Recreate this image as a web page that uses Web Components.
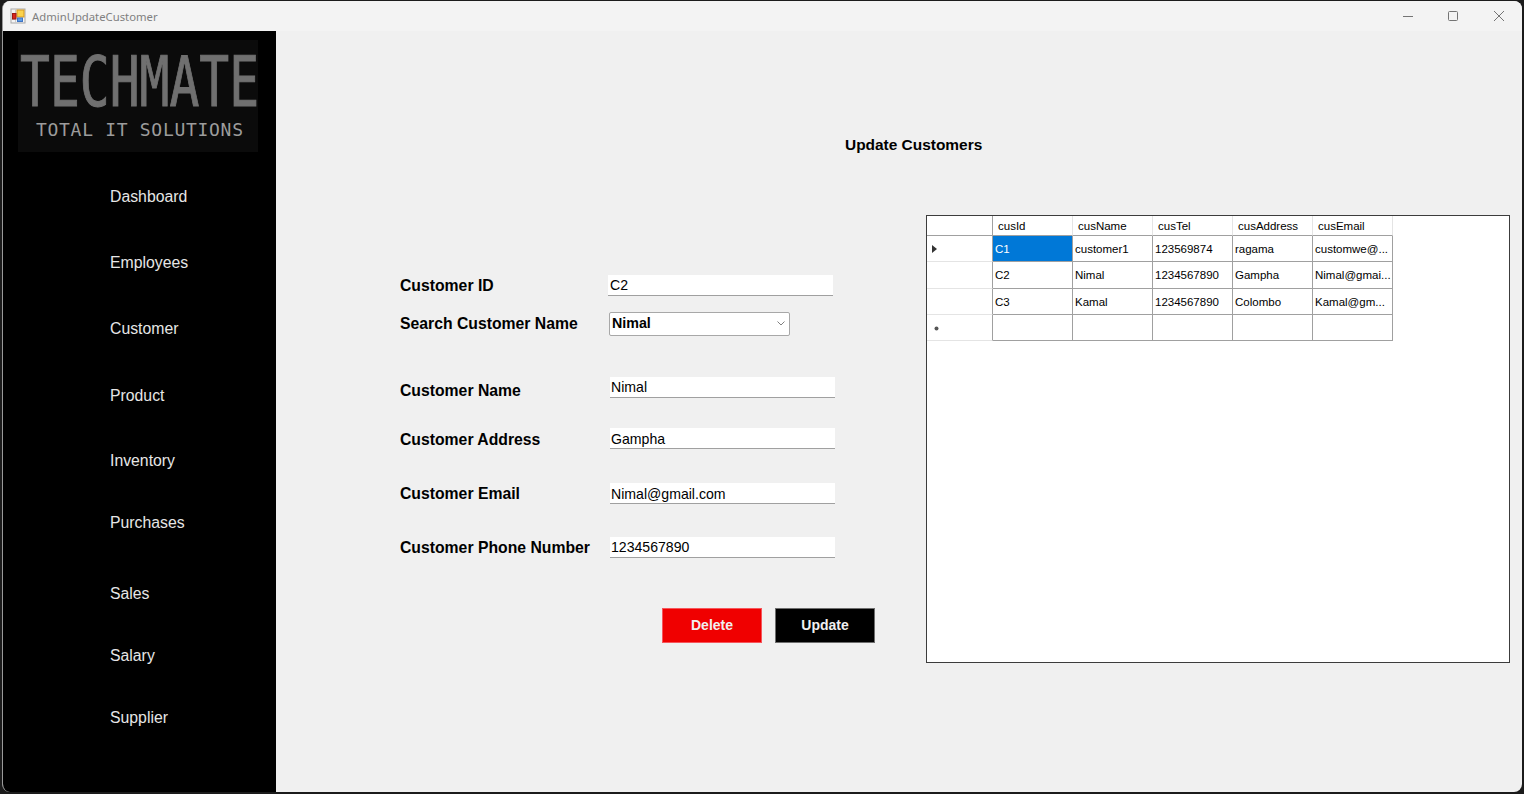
<!DOCTYPE html>
<html>
<head>
<meta charset="utf-8">
<title>AdminUpdateCustomer</title>
<style>
  html, body { margin: 0; height: 100%; background: #1b1b1b; overflow: hidden; }
  body { font-family: "Liberation Sans", Arial, sans-serif; }
</style>
</head>
<body>
<app-window>
  <side-nav slot="side">
    <nav-item>Dashboard</nav-item>
    <nav-item>Employees</nav-item>
    <nav-item>Customer</nav-item>
    <nav-item>Product</nav-item>
    <nav-item>Inventory</nav-item>
    <nav-item>Purchases</nav-item>
    <nav-item>Sales</nav-item>
    <nav-item>Salary</nav-item>
    <nav-item>Supplier</nav-item>
  </side-nav>
  <update-panel>
    <form-row label="Customer ID" field-x="208" gap="0"><text-box style="padding-left:2px">C2</text-box></form-row>
    <form-row label="Search Customer Name" field-x="209" gap="16" height="24"><combo-box>Nimal</combo-box></form-row>
    <form-row label="Customer Name" field-x="210" gap="41" shift="7"><text-box>Nimal</text-box></form-row>
    <form-row label="Customer Address" field-x="210" gap="30" shift="2"><text-box style="padding-top:2px">Gampha</text-box></form-row>
    <form-row label="Customer Email" field-x="210" gap="34"><text-box style="padding-top:2px">Nimal@gmail.com</text-box></form-row>
    <form-row label="Customer Phone Number" field-x="210" gap="33"><text-box>1234567890</text-box></form-row>
    <button-row>
      <action-button kind="danger">Delete</action-button>
      <action-button>Update</action-button>
    </button-row>
    <data-grid slot="grid"></data-grid>
  </update-panel>
</app-window>

<script>
class AppWindow extends HTMLElement {
  constructor() {
    super();
    this.attachShadow({ mode: "open" }).innerHTML = `
    <style>
      :host { display: flex; flex-direction: column; box-sizing: border-box; width: 1520px; height: 791px;
        margin: 1px 2px; border-left: 1px solid #9a9a9a; border-radius: 8px; overflow: hidden; background: #f0f0f0; }
      .bar { display: flex; align-items: center; height: 30px; flex: none; background: #f3f3f3; color: #808080;
        font: 11.300px "Noto Sans", "Open Sans", sans-serif; }
      .icon { width: 16px; height: 16px; margin: 0 6px 0 7px; flex: none; }
      .title { flex: 1; }
      .ctl { box-sizing: border-box; width: 45px; height: 30px; display: flex; align-items: center; justify-content: center; }
      .ctl.shift { padding-right: 2px; }
      .ctl svg { width: 12px; height: 12px; fill: none; stroke: #747474; stroke-width: 1; }
      .body { flex: 1; display: flex; min-height: 0; }
    </style>
    <div class="bar">
      <svg class="icon" viewBox="0 0 16 16">
        <rect x="1" y="1" width="14" height="14" fill="#f4f4f4" stroke="#a9a9a9"/>
        <path d="M5.5 1v4M1 5.5h5M1 11.500h4M5.500 11v4" stroke="#c9c9c9" fill="none"/>
        <rect x="7" y="2" width="7" height="7" fill="#fbd34d" stroke="#d79a1e"/>
        <rect x="2.500" y="5.500" width="3.500" height="5.500" fill="#d8261c" stroke="#9c1a14"/>
        <rect x="7.500" y="10" width="5" height="3.500" fill="#5c9ee8" stroke="#3f74c4"/>
      </svg>
      <div class="title">AdminUpdateCustomer</div>
      <div class="ctl shift"><svg viewBox="0 0 12 12"><path d="M1 6.500h10"/></svg></div>
      <div class="ctl shift"><svg viewBox="0 0 12 12"><rect x="1.500" y="1.500" width="9" height="9" rx="1"/></svg></div>
      <div class="ctl" style="margin-right:1px"><svg viewBox="0 0 12 12"><path d="M1 1l10 10M11 1L1 11"/></svg></div>
    </div>
    <div class="body"><slot name="side"></slot><slot></slot></div>`;
  }
}

class SideNav extends HTMLElement {
  constructor() {
    super();
    this.attachShadow({ mode: "open" }).innerHTML = `
    <style>
      :host { display: block; width: 273px; flex: none; background: #000; }
      .logo { box-sizing: border-box; width: 240px; height: 112px; margin: 9px 0 0 15px; padding-top: 17px;
        background: #0b0b0b; overflow: hidden; }
      .big { height: 51px; margin-left: 2px; white-space: nowrap; color: #707070; -webkit-text-stroke: 1px #707070;
        font: 70px/51px "DejaVu Sans Mono", monospace; transform: scaleX(.709); transform-origin: 0 50%; }
      .small { margin: 15px 0 0 18px; height: 14px; white-space: nowrap; color: #9c9c9c;
        font: 18px/14px "DejaVu Sans Mono", monospace; letter-spacing: .7px; }
      nav { display: grid; grid-template-rows: 66px 66px 67px 65px 62px 71px 62px 62px 40px; margin-top: 36px; }
    </style>
    <div class="logo"><div class="big">TECHMATE</div><div class="small">TOTAL IT SOLUTIONS</div></div>
    <nav><slot></slot></nav>`;
  }
}

class NavItem extends HTMLElement {
  constructor() {
    super();
    this.attachShadow({ mode: "open" }).innerHTML = `
    <style>
      :host { display: block; padding-left: 107px; color: #e6e6e6;
        font: 15.800px/18px "Liberation Sans", sans-serif; }
    </style>
    <slot></slot>`;
  }
}

class UpdatePanel extends HTMLElement {
  constructor() {
    super();
    this.attachShadow({ mode: "open" }).innerHTML = `
    <style>
      :host { display: block; flex: 1; color: #000; font-family: "Liberation Sans", sans-serif; }
      h1 { margin: 105px 0 0 569px; height: 18px; font-size: 15.450px; line-height: 18px; font-weight: bold; }
      .cols { display: flex; margin: 61px 0 0 124px; }
      .form { width: 526px; flex: none; padding-top: 60px; }
    </style>
    <h1>Update Customers</h1>
    <div class="cols">
      <div class="form"><slot></slot></div>
      <slot name="grid"></slot>
    </div>`;
  }
}

class FormRow extends HTMLElement {
  constructor() {
    super();
    this.attachShadow({ mode: "open" });
  }
  connectedCallback() {
    const x = this.getAttribute("field-x") || 210;
    const h = this.getAttribute("height") || 21;
    const gap = this.getAttribute("gap") || 0;
    const shift = this.getAttribute("shift") || 0;
    this.shadowRoot.innerHTML = `
    <style>
      :host { display: flex; align-items: center; height: ${h}px; margin-top: ${gap}px; }
      label { width: ${x}px; flex: none; margin-top: ${shift}px; font: bold 15.750px "Liberation Sans", sans-serif; color: #000; white-space: nowrap; }
    </style>
    <label>${this.getAttribute("label")}</label>
    <slot></slot>`;
  }
}

class TextBox extends HTMLElement {
  constructor() {
    super();
    this.attachShadow({ mode: "open" }).innerHTML = `
    <style>
      :host { display: block; box-sizing: border-box; width: 225px; height: 21px; padding: 1px 1px 0; background: #fff;
        border-bottom: 1px solid #a0a0a0; font: 14.100px/18px "Liberation Sans", sans-serif; color: #000; }
    </style>
    <slot></slot>`;
  }
}

class ComboBox extends HTMLElement {
  constructor() {
    super();
    this.attachShadow({ mode: "open" }).innerHTML = `
    <style>
      :host { display: flex; align-items: center; justify-content: space-between; box-sizing: border-box; width: 181px; height: 24px;
        padding: 0 4px 2px 2px; background: #fff; border: 1px solid #a8a8a8; border-radius: 2px;
        font: bold 14.250px "Liberation Sans", sans-serif; color: #000; }
      svg { width: 8px; height: 5px; fill: none; stroke: #808080; stroke-width: 1; }
    </style>
    <slot></slot>
    <svg viewBox="0 0 8 5"><path d="M.500 .500L4 4L7.500 .500"/></svg>`;
  }
}

class ButtonRow extends HTMLElement {
  constructor() {
    super();
    this.attachShadow({ mode: "open" }).innerHTML = `
    <style>:host { display: flex; gap: 13px; margin: 50px 0 0 262px; }</style>
    <slot></slot>`;
  }
}

class ActionButton extends HTMLElement {
  constructor() {
    super();
    const danger = this.getAttribute("kind") === "danger";
    this.attachShadow({ mode: "open" }).innerHTML = `
    <style>
      :host { display: flex; align-items: center; justify-content: center; box-sizing: border-box; width: 100px; height: 35px;
        padding-bottom: 2px; background: ${danger ? "#f00000" : "#000"}; border: 1px solid ${danger ? "#f6555b" : "#6e6e6e"};
        color: #f0f0f0; font: bold 14px "Liberation Sans", sans-serif; }
    </style>
    <slot></slot>`;
  }
}

class DataGrid extends HTMLElement {
  constructor() {
    super();
    this.columns = ["cusId", "cusName", "cusTel", "cusAddress", "cusEmail"];
    this.rows = [
      ["C1", "customer1", "123569874", "ragama", "customwe@..."],
      ["C2", "Nimal", "1234567890", "Gampha", "Nimal@gmai..."],
      ["C3", "Kamal", "1234567890", "Colombo", "Kamal@gm..."],
      ["", "", "", "", ""]
    ];
    this.attachShadow({ mode: "open" });
  }
  connectedCallback() {
    const head = this.columns.map(c => `<div class="hd">${c}</div>`).join("");
    const arrow = `<svg width="5" height="8" viewBox="0 0 5 8"><path d="M0 0l5 4l-5 4z" fill="#333"/></svg>`;
    const star = `<svg width="5" height="5" viewBox="0 0 5 5"><circle cx="2.500" cy="2.500" r="2" fill="#555"/></svg>`;
    const body = this.rows.map((row, i) => {
      const mark = i === 0 ? arrow : i === 3 ? star : "";
      const cells = row.map((v, j) => `<div class="cell${i === 0 && j === 0 ? " sel" : ""}">${v}</div>`).join("");
      return `<div class="rh${i === 3 ? " new" : ""}">${mark}</div>${cells}`;
    }).join("");
    this.shadowRoot.innerHTML = `
    <style>
      :host { display: block; box-sizing: border-box; width: 584px; height: 448px; background: #fff; border: 1px solid #3c3c3c;
        font: 11.500px "Liberation Sans", sans-serif; color: #000; }
      .grid { display: grid; grid-template-columns: 66px repeat(5, 80px); grid-template-rows: 20px 26px 27px 26px 26px; width: max-content; }
      .grid > div { box-sizing: border-box; display: flex; align-items: center; overflow: hidden; white-space: nowrap; }
      .corner { border-right: 1px solid #a0a0a0; border-bottom: 1px solid #a0a0a0; }
      .hd { padding-left: 5px; border-right: 1px solid #e4e4e4; border-bottom: 1px solid #a0a0a0; }
      .rh { padding-left: 5px; border-right: 1px solid #a0a0a0; border-bottom: 1px solid #e4e4e4; }
      .rh.new { padding-left: 7px; padding-top: 2px; }
      .cell { padding-left: 2px; border-right: 1px solid #a0a0a0; border-bottom: 1px solid #a0a0a0; }
      .sel { background: #0078d7; color: #fff; }
    </style>
    <div class="grid"><div class="corner"></div>${head}${body}</div>`;
  }
}

customElements.define("app-window", AppWindow);
customElements.define("side-nav", SideNav);
customElements.define("nav-item", NavItem);
customElements.define("update-panel", UpdatePanel);
customElements.define("form-row", FormRow);
customElements.define("text-box", TextBox);
customElements.define("combo-box", ComboBox);
customElements.define("button-row", ButtonRow);
customElements.define("action-button", ActionButton);
customElements.define("data-grid", DataGrid);
</script>
</body>
</html>
